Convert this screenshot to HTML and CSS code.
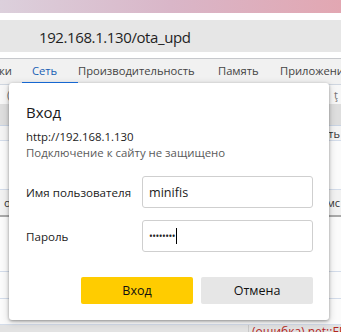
FILE: index.html
```html
<!DOCTYPE html>
<html lang="ru">
<head>
<meta charset="utf-8">
<link rel="stylesheet" href="styles.css">
</head>
<body>
<div class="screen">
  <div class="titlebar"></div>
  <div class="gap"></div>
  <div class="address"><span class="url">192.168.1.130/ota_upd</span></div>
  <div class="gap gap2"></div>
  <div class="devtools">
    <div class="tabs">
      <span class="tab tab-cut">ки</span>
      <span class="tab active">Сеть</span>
      <span class="tab">Производительность</span>
      <span class="tab">Память</span>
      <span class="tab">Приложени</span>
    </div>
    <div class="toolbar"><span class="paren">(</span><span class="tb-right">ţ</span></div>
    <div class="filterband"></div>
    <div class="row row-a"><span class="r-right">ть</span></div>
    <div class="row row-b"></div>
    <div class="header"><span class="h-left">o</span><span class="h-right">мс</span></div>
    <div class="row row-c"></div>
    <div class="row row-d"></div>
    <div class="row row-e"></div>
    <div class="status"><span class="err">(ошибка) net::ERR</span></div>
  </div>

  <div class="dialog">
    <div class="d-title">Вход</div>
    <div class="d-origin">http://192.168.1.130</div>
    <div class="d-warn">Подключение к сайту не защищено</div>
    <div class="d-form">
      <label class="d-label">Имя пользователя</label>
      <div class="d-input">minifis</div>
      <label class="d-label">Пароль</label>
      <div class="d-input pass"><span class="dots">••••••••</span><span class="caret"></span></div>
    </div>
    <div class="d-buttons">
      <button class="btn btn-ok">Вход</button>
      <button class="btn btn-cancel">Отмена</button>
    </div>
  </div>
</div>
</body>
</html>
```

FILE: styles.css
```css
* { box-sizing: border-box; }
html, body { margin: 0; padding: 0; }
body {
  width: 341px;
  height: 332px;
  overflow: hidden;
  background: #fff;
  font-family: "Open Sans", "Noto Sans", sans-serif;
}
.screen {
  position: relative;
  width: 341px;
  height: 332px;
  overflow: hidden;
}
.titlebar {
  height: 13px;
  background: linear-gradient(90deg, #dcd0dc 0%, #d9b6c8 50%, #e2a7b2 100%);
}
.gap { height: 7px; background: #fff; }
.gap2 { height: 6px; }
.address {
  height: 32px;
  background: #e6e6e6;
  display: flex;
  align-items: center;
  padding-left: 39px;
}
.url {
  font-family: "Open Sans", sans-serif;
  font-size: 15px;
  color: #1f1f1f;
  letter-spacing: -0.4px;
  position: relative;
  top: 1px;
}
.devtools {
  border-top: 1px solid #c6c8cc;
  background: #fafafa;
  height: 275px;
  font-family: "Open Sans", sans-serif;
  font-size: 11px;
  color: #333;
}
.tabs {
  height: 26px;
  background: #f1f1f1;
  border-bottom: 1px solid #cfd6e0;
  display: flex;
  align-items: center;
  position: relative;
  overflow: hidden;
}
.tab {
  flex-shrink: 0;
  color: #444;
  white-space: nowrap;
  position: relative;
  top: -1px;
  font-size: 11.2px;
}
.tab-cut { margin-left: -1px; width: 33px; }
.active { color: #1a5fb4; width: 46px; }
.active::after {
  content: "";
  position: absolute;
  left: -10px;
  right: 0;
  bottom: -6px;
  height: 2px;
  background: #1a73e8;
}
.tab:nth-child(3) { width: 140px; }
.tab:nth-child(4) { width: 62px; }
.toolbar {
  height: 19px;
  display: flex;
  align-items: center;
  justify-content: space-between;
  padding: 0 3px 0 7px;
  color: #777;
  background: #f7f7f7;
}
.filterband { height: 22px; background: #dedede; border-bottom: 1px solid #c9d4e4; }
.row { border-bottom: 1px solid #d3dcea; background: #fbfbfb; display: flex; justify-content: flex-end; align-items: center; padding-right: 1px; color: #333; }
.row-a { height: 15px; background: #f4f4f4; }
.row-b { height: 49px; }
.header {
  height: 27px;
  background: #f2f2f2;
  border-bottom: 2px solid #a9a9a9;
  display: flex;
  justify-content: space-between;
  align-items: center;
  padding: 0 1px 0 4px;
}
.row-c { height: 55px; }
.row-d { height: 27px; }
.row-e { height: 26px; }
.status {
  height: 20px;
  background: #e2e2e2;
  padding-left: 252px;
  position: relative;
}
.status::before {
  content: "";
  position: absolute;
  left: 248px; top: 0; bottom: 0;
  width: 1px;
  background: #c9c9c9;
}
.err { color: #b3261e; font-size: 12px; position: relative; top: -2px; white-space: nowrap; }

.dialog {
  position: absolute;
  left: 9px;
  top: 83px;
  width: 320px;
  height: 237px;
  background: #fff;
  border-radius: 3px;
  box-shadow: 0 1px 3px rgba(0,0,0,0.35), 0 2px 8px rgba(0,0,0,0.18);
  padding: 19px 16px 0 17px;
  color: #1f1f1f;
  font-family: "Open Sans", sans-serif;
}
.d-title { font-size: 15px; line-height: 20px; color: #1a1a1a; }
.d-origin { font-size: 11.4px; margin-top: 7px; line-height: 16px; color: #222; }
.d-warn { font-size: 11.4px; line-height: 16px; color: #5a5a5a; }
.d-form {
  margin-top: 15px;
  display: grid;
  grid-template-columns: 116px 171px;
  grid-template-rows: 32px 32px;
  row-gap: 12px;
  align-items: center;
}
.d-label { font-size: 11.6px; color: #222; }
.d-input {
  height: 32px;
  border: 1px solid #cfcfcf;
  border-radius: 3px;
  padding-left: 6px;
  display: flex;
  align-items: center;
  font-size: 12.6px;
  color: #1a1a1a;
}
.pass .dots { font-size: 10px; letter-spacing: -0.5px; color: #222; }
.caret { display: inline-block; width: 1px; height: 16px; background: #000; margin-left: 1px; }
.d-buttons {
  margin-top: 25px;
  display: flex;
  justify-content: flex-end;
  gap: 8px;
  width: 287px;
}
.btn {
  width: 112px;
  height: 27px;
  border: none;
  border-radius: 2px;
  font-family: "Open Sans", sans-serif;
  font-size: 12.5px;
  color: #111;
  padding: 0;
}
.btn-ok { background: #ffcc00; }
.btn-cancel { background: #e6e6e6; }
```
